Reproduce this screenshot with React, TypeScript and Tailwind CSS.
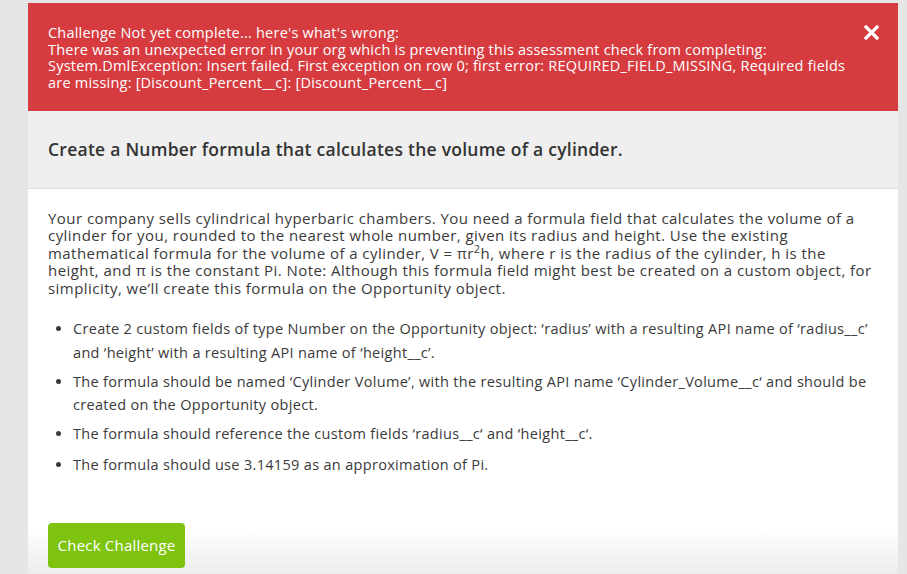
import React from "react";

export default function App() {
  const font = { fontFamily: '"Open Sans", "Noto Sans", sans-serif' };
  return (
    <div
      className="h-[574px] w-[907px] overflow-hidden bg-[#e6e6e6] pl-[28px] pr-[9px] pt-[3px]"
      style={font}
    >
      <div className="flex h-full flex-col">
        {/* Error banner */}
        <div className="relative h-[108px] whitespace-nowrap bg-[#d63c3f] pl-[20px] pr-[30px] pt-[22px] text-[14.5px] leading-[16.7px] tracking-[0.22px] text-white">
          <p>Challenge Not yet complete... here's what's wrong:</p>
          <p>
            There was an unexpected error in your org which is preventing this assessment check from completing:
            <br />
            System.DmlException: Insert failed. First exception on row 0; first error: REQUIRED_FIELD_MISSING, Required fields
            <br />
            are missing: [Discount_Percent__c]: [Discount_Percent__c]
          </p>
          <button className="absolute right-[19px] top-[21px] flex h-[16px] w-[16px] items-center justify-center">
            <svg width="15" height="15" viewBox="0 0 15 15">
              <path d="M2 2 L13 13 M13 2 L2 13" stroke="white" strokeWidth="3.2" strokeLinecap="square" />
            </svg>
          </button>
        </div>

        {/* Header */}
        <div className="flex h-[78px] items-center border-b border-[#dcdcdc] bg-[#efefef] pl-[20px]">
          <h2 className="text-[17.5px] font-semibold tracking-[0.25px] text-[#333333]">
            Create a Number formula that calculates the volume of a cylinder.
          </h2>
        </div>

        {/* Content */}
        <div className="flex-1 whitespace-nowrap bg-[linear-gradient(to_bottom,#ffffff_0%,#ffffff_88%,#ececec_100%)] pl-[20px] pr-[26px] pt-[21px] text-[#3a3a3a]">
          <p className="text-[15px] leading-[17.4px] tracking-[0.45px]">
            Your company sells cylindrical hyperbaric chambers. You need a formula field that calculates the volume of a
            <br />
            cylinder for you, rounded to the nearest whole number, given its radius and height. Use the existing
            <br />
            mathematical formula for the volume of a cylinder, V = πr<sup className="text-[11px] leading-none">2</sup>h, where r is the radius of the cylinder, h is the
            <br />
            height, and π is the constant Pi. Note: Although this formula field might best be created on a custom object, for
            <br />
            simplicity, we’ll create this formula on the Opportunity object.
          </p>

          <ul className="mt-[20px] list-disc pl-[25px] text-[14.5px] leading-[23.5px] tracking-[0.32px]">
            <li className="mb-[5.5px]">
              Create 2 custom fields of type Number on the Opportunity object: ‘radius’ with a resulting API name of ‘radius__c’
              <br />
              and ‘height’ with a resulting API name of ‘height__c’.
            </li>
            <li className="mb-[5.5px]">
              The formula should be named ‘Cylinder Volume’, with the resulting API name ‘Cylinder_Volume__c‘ and should be
              <br />
              created on the Opportunity object.
            </li>
            <li className="mb-[7px]">The formula should reference the custom fields ‘radius__c‘ and ‘height__c‘.</li>
            <li>The formula should use 3.14159 as an approximation of Pi.</li>
          </ul>

          <button className="mt-[47px] h-[45px] w-[137px] rounded-[4px] bg-[#7ec40f] text-[15px] tracking-[0.2px] text-white">
            Check Challenge
          </button>
        </div>
      </div>
    </div>
  );
}
